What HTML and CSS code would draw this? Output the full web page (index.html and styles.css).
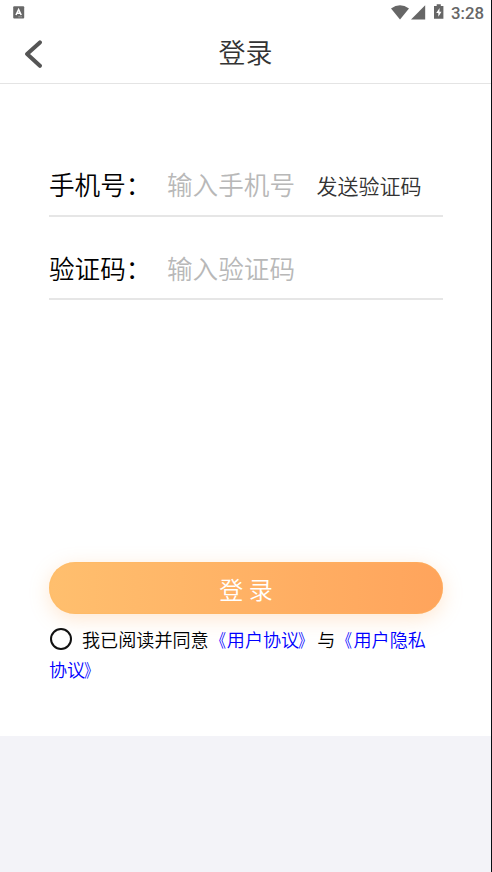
FILE: index.html
```html
<!DOCTYPE html>
<html lang="zh-CN">
<head>
<meta charset="utf-8">
<title>登录</title>
<link rel="stylesheet" href="styles.css">
</head>
<body>
<div class="screen">
  <div class="status">
    <svg class="app-icon" width="12" height="13" viewBox="0 0 12 13"><rect x="0.2" y="0.2" width="11" height="12.2" rx="1" fill="#686868"/><path d="M3 9 5.6 3.5 8.2 9M4 7.3h3.2" fill="none" stroke="#fff" stroke-width="1.6"/><path d="M5.5 10.8h1.2M7.5 10.8h1.2" stroke="#ddd" stroke-width=".7"/></svg>
    <div class="status-right">
      <svg width="18" height="15" viewBox="0 0 18 15"><path d="M0 3.4Q9-2.8 18 3.4L9 14.4Z" fill="#666"/></svg>
      <svg class="signal" width="15" height="15" viewBox="0 0 15 15"><path d="M14.2.3V14.4H0Z" fill="#666"/></svg>
      <svg class="battery" width="10" height="15" viewBox="0 0 10 15"><path d="M0 2h2.7V.3h4.1V2h2.6v12.8H0Z" fill="#666"/><path d="M5.6 4 2.2 9h2.1v3.7L7.5 7.7H5.4Z" fill="#fff"/></svg>
      <span class="time">3:28</span>
    </div>
  </div>
  <header class="header">
    <svg class="back" width="18" height="28" viewBox="0 0 18 28"><path d="M15.9 2.4 3.1 14 15.9 25.8" fill="none" stroke="#555" stroke-width="4" stroke-linecap="round" stroke-linejoin="round"/></svg>
    <h1 class="title">登录</h1>
  </header>
  <main class="content">
    <div class="field first"><span class="label">手机号：</span><span class="hint">输入手机号</span><span class="send">发送验证码</span></div>
    <div class="field"><span class="label">验证码：</span><span class="hint">输入验证码</span></div>
    <div class="login">登 录</div>
    <div class="agree">
      <div class="line"><span class="radio"></span><span>我已阅读并同意</span><span class="link"><span class="open">《</span>用户协议<span class="close">》</span></span><span>与</span><span class="link"><span class="open">《</span>用户隐私</span></div>
      <div class="line"><span class="link">协议<span class="close">》</span></span></div>
    </div>
  </main>
</div>
</body>
</html>
```
FILE: styles.css
```css
* { box-sizing: border-box; }
body {
  margin: 0;
  height: 872px;
  overflow: hidden;
  background: #f3f3f8;
  border-right: 1px solid #0a0f14;
  font-family: "Noto Sans CJK SC DemiLight", "Noto Sans CJK SC", sans-serif;
  font-weight: 350;
  color: #000;
}
.screen { height: 736px; background: #fff; }
.status {
  height: 24px;
  padding: 5px 7px 0 13px;
  display: flex;
  justify-content: space-between;
}
.app-icon { margin-top: 1px; }
.status-right { display: flex; }
.signal { margin-left: 2px; }
.battery { margin: -1px 0 0 8px; }
.time {
  margin-left: 7px;
  font: 500 16.8px/17px Roboto, sans-serif;
  color: #666;
}
.header {
  height: 60px;
  border-bottom: 1px solid #e4e4e4;
  display: grid;
  grid-template-columns: 1fr auto 1fr;
  align-items: center;
}
.back { margin-left: 24px; }
.title {
  margin: 0;
  padding-bottom: 4px;
  font-size: 27px;
  line-height: 40px;
  font-weight: 350;
  color: #333;
}
.content { padding: 70px 48px 0 49px; }
.field {
  height: 83px;
  padding-top: 21px;
  border-bottom: 2px solid #e6e6e6;
  display: flex;
  align-items: center;
  font-size: 25.6px;
  line-height: 36px;
  white-space: nowrap;
}
.field.first { height: 63px; padding: 0 0 2px; }
.label { width: 118px; }
.hint { width: 150px; color: #b8b8b8; }
.send { padding-top: 2px; margin-left: -0.5px; font-size: 21px; color: #333; }
.login {
  height: 52px;
  margin-top: 262px;
  border-radius: 26px;
  background: linear-gradient(90deg, #ffbf6e, #ffa45c);
  box-shadow: 0 5px 20px rgba(255, 170, 90, .28), inset 0 0 2px #ffb75c;
  color: #fff;
  font-size: 24px;
  line-height: 54px;
  text-align: center;
}
.agree {
  margin-top: 11px;
  font-size: 18.1px;
  line-height: 29px;
}
.line {
  display: flex;
  align-items: center;
  height: 29.5px;
  white-space: nowrap;
}
.radio {
  width: 22px;
  height: 22px;
  margin: -1px 10px 0 1px;
  border: 2px solid #111;
  border-radius: 50%;
}
.link { color: #00f; }
.open, .close { display: inline-block; }
.open { transform: translateX(-1px) scaleX(.8); transform-origin: right; }
.close { transform: translateX(-1px) scaleX(.8); transform-origin: left; }
```
